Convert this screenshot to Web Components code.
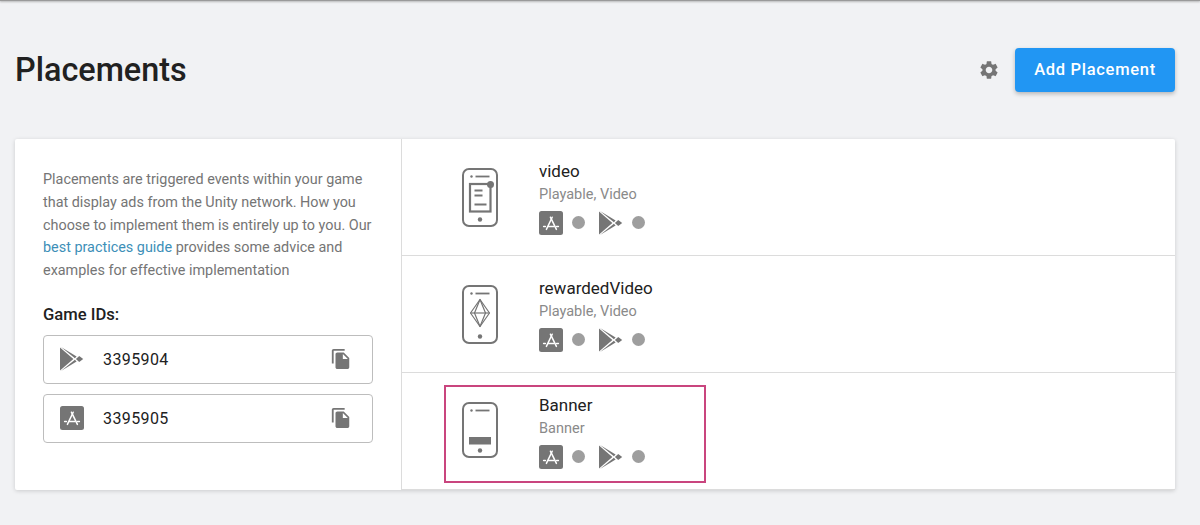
<!DOCTYPE html>
<html>
<head>
<meta charset="utf-8">
<title>Placements</title>
<style>
html, body { margin: 0; padding: 0; height: 100%; overflow: hidden; }
body { background: #f1f2f4; font-family: Roboto, "Liberation Sans", sans-serif; }
</style>
</head>
<body>
<placements-page>
  <span slot="title">Placements</span>
  <info-panel slot="left">
    Placements are triggered events within your game that display ads from the Unity network. How you choose to implement them is entirely up to you. Our <a href="#">best practices guide</a> provides some advice and examples for effective implementation
    <game-id slot="ids" store="play">3395904</game-id>
    <game-id slot="ids" store="apple">3395905</game-id>
  </info-panel>
  <placement-row slot="rows" kind="video"><span slot="name">video</span><span slot="sub">Playable, Video</span></placement-row>
  <placement-row slot="rows" kind="rewarded"><span slot="name">rewardedVideo</span><span slot="sub">Playable, Video</span></placement-row>
  <placement-row slot="rows" kind="banner" highlight><span slot="name">Banner</span><span slot="sub">Banner</span></placement-row>
</placements-page>

<script>
// small helper, every component just sets its own shadow markup
function shadow(el, html) {
  el.attachShadow({ mode: 'open' }).innerHTML = html
}

const GEAR = 'M19.14 12.94c.04-.3.06-.61.06-.94 0-.32-.02-.64-.07-.94l2.03-1.58c.18-.14.23-.41.12-.61l-1.92-3.32c-.12-.22-.37-.29-.59-.22l-2.39.96c-.5-.38-1.03-.7-1.62-.94l-.36-2.54c-.04-.24-.24-.41-.48-.41h-3.84c-.24 0-.43.17-.47.41l-.36 2.54c-.59.24-1.13.57-1.62.94l-2.39-.96c-.22-.08-.47 0-.59.22L2.74 8.87c-.12.21-.08.47.12.61l2.03 1.58c-.05.3-.09.63-.09.94s.02.64.07.94l-2.03 1.58c-.18.14-.23.41-.12.61l1.92 3.32c.12.22.37.29.59.22l2.39-.96c.5.38 1.03.7 1.62.94l.36 2.54c.05.24.24.41.48.41h3.84c.24 0 .44-.17.47-.41l.36-2.54c.59-.24 1.13-.56 1.62-.94l2.39.96c.22.08.47 0 .59-.22l1.92-3.32c.12-.22.07-.47-.12-.61l-2.01-1.58zM12 15.6c-1.98 0-3.6-1.62-3.6-3.6s1.62-3.6 3.6-3.6 3.6 1.62 3.6 3.6-1.62 3.6-3.6 3.6z'
const COPY = 'M16 1H4c-1.1 0-2 .9-2 2v14h2V3h12V1zm-1 4l6 6v10c0 1.1-.9 2-2 2H7.99C6.89 23 6 22.1 6 21l.01-14c0-1.1.89-2 1.99-2h7zm-1 7h5.5L14 6.5V12z'

class StoreIcon extends HTMLElement {
  constructor() {
    super()
    const play = this.getAttribute('type') === 'play'
    const svg = play
      ? `<svg width="24" height="24" viewBox="0 0 24 24">
           <path fill="#757575" d="M0 .6 V23.4 L13.4 12 Z"/>
           <path fill="#757575" d="M1 0 L16.6 9.6 L14.9 11.2 Z"/>
           <path fill="#757575" d="M1 24 L16.6 14.4 L14.9 12.8 Z"/>
           <path fill="#757575" d="M19.2 8.9 L23.2 12 L19.2 15.1 L15.9 12 Z"/>
         </svg>`
      : `<svg width="24" height="24" viewBox="0 0 24 24">
           <rect width="24" height="24" rx="2.5" fill="#757575"/>
           <g stroke="#fff" stroke-width="1.5" fill="none" stroke-linecap="round">
             <path d="M13.2 6.2 L7.4 18.4"/>
             <path d="M11.4 6.2 L17.4 18.4"/>
             <path d="M4.6 15.4 L6.4 15.4 M9 15.4 L15 15.4 M17.6 15.4 L19.4 15.4"/>
           </g>
         </svg>`
    shadow(this, `<style>:host { display: block; width: 24px; height: 24px; } svg { display: block; }</style>${svg}`)
  }
}
customElements.define('store-icon', StoreIcon)

class PhoneIcon extends HTMLElement {
  constructor() {
    super()
    const kind = this.getAttribute('kind')
    const h = { video: 59, rewarded: 59, banner: 56 }[kind]
    const screens = {
      video: `<rect x="8" y="16" width="20.5" height="27.5" fill="none" stroke="#757575" stroke-width="2.2"/>
              <path d="M12.5 22.5h8M12.5 27.5h8M12.5 36.5h12" stroke="#757575" stroke-width="2.2"/>
              <circle cx="28.5" cy="16.5" r="3.5" fill="#757575"/>`,
      rewarded: `<g fill="none" stroke="#757575" stroke-width="1.2" stroke-linejoin="round">
                   <path d="M18 14.5 L27.5 28 L18 41.5 L8.5 28 Z"/>
                   <path d="M18 14.5 L12.5 28 L18 41.5 L23.5 28 Z"/>
                   <path d="M8.5 28 H27.5"/>
                 </g>`,
      banner: `<rect x="7" y="35" width="22" height="7.5" fill="#757575"/>`
    }
    // the banner phone sits a pixel above the row's centre in the design
    const shift = kind === 'banner' ? 'margin-top: -2px;' : ''
    shadow(this, `<style>:host { display: block; width: 36px; height: ${h}px; ${shift} } svg { display: block; }</style>
      <svg width="36" height="${h}" viewBox="0 0 36 ${h}">
        <rect x="1" y="1" width="34" height="${h - 2}" rx="6" fill="none" stroke="#757575" stroke-width="2"/>
        <circle cx="9.5" cy="8.5" r="1.2" fill="#757575"/>
        <path d="M13.5 8.5h14" stroke="#757575" stroke-width="1.8"/>
        <circle cx="18" cy="${h - 7.5}" r="2.2" fill="#757575"/>
        ${screens[kind] || ''}
      </svg>`)
  }
}
customElements.define('phone-icon', PhoneIcon)

class PlacementRow extends HTMLElement {
  constructor() {
    super()
    shadow(this, `<style>
      :host { display: flex; position: relative; align-items: center; height: 116px; padding-left: 60px; box-sizing: content-box; border-bottom: 1px solid #dcdcdc; }
      .text { margin-left: 41px; padding-top: .5px; display: flex; flex-direction: column; }
      .name { font-size: 17px; line-height: 22px; color: #212121; height: 22px; }
      .sub { font-size: 14.5px; line-height: 20px; color: #8a8a8a; margin-top: 2.5px; }
      .stores { display: flex; align-items: center; margin-top: 6px; }
      .dot { width: 13px; height: 13px; border-radius: 50%; background: #9e9e9e; margin-left: 9px; }
      .dot + store-icon { margin-left: 14px; }
      .hl { display: none; position: absolute; left: 42px; top: 12px; width: 258px; height: 94px; border: 2px solid #c9457e; }
      :host([highlight]) .hl { display: block; }
    </style>
    <phone-icon kind="${this.getAttribute('kind')}"></phone-icon>
    <div class="text">
      <div class="name"><slot name="name"></slot></div>
      <div class="sub"><slot name="sub"></slot></div>
      <div class="stores">
        <store-icon type="apple"></store-icon><div class="dot"></div>
        <store-icon type="play"></store-icon><div class="dot"></div>
      </div>
    </div>
    <div class="hl"></div>`)
  }
}
customElements.define('placement-row', PlacementRow)

class GameId extends HTMLElement {
  constructor() {
    super()
    shadow(this, `<style>
      :host { display: flex; align-items: center; height: 47px; padding: 0 20px 0 16px; border: 1px solid #bdbdbd; border-radius: 4px; color: #212121; font-size: 16px; letter-spacing: .4px; }
      .id { flex: 1; margin-left: 19px; }
      svg { display: block; }
    </style>
    <store-icon type="${this.getAttribute('store')}"></store-icon>
    <div class="id"><slot></slot></div>
    <svg width="22" height="22" viewBox="0 0 24 24"><path fill="#757575" d="${COPY}"/></svg>`)
  }
}
customElements.define('game-id', GameId)

class InfoPanel extends HTMLElement {
  constructor() {
    super()
    shadow(this, `<style>
      :host { display: block; box-sizing: border-box; width: 387px; padding: 30px 28px 0; border-right: 1px solid #dcdcdc; flex: none; }
      .copy { font-size: 14.4px; line-height: 22.75px; color: #757575; }
      ::slotted(a) { color: #3d8fb8; text-decoration: none; }
      h3 { margin: 22px 0 10px; font-size: 16.6px; font-weight: 500; line-height: 20px; color: #212121; }
      .ids { display: flex; flex-direction: column; gap: 10px; }
    </style>
    <div class="copy"><slot></slot></div>
    <h3>Game IDs:</h3>
    <div class="ids"><slot name="ids"></slot></div>`)
  }
}
customElements.define('info-panel', InfoPanel)

class PlacementsPage extends HTMLElement {
  constructor() {
    super()
    shadow(this, `<style>
      :host { display: block; }
      .topbar { height: 1px; background: #9a9a9a; box-shadow: 0 1px 2px rgba(0,0,0,.35); }
      header { display: flex; align-items: center; height: 138px; box-sizing: border-box; padding: 0 25px 0 15px; }
      h1 { flex: 1; margin: 0; font-size: 32.4px; font-weight: 500; color: #212121; }
      svg { display: block; margin-right: 15px; }
      button { width: 160px; height: 44px; border: 0; border-radius: 4px; background: #2196f3; color: #fff; font: 500 16.5px Roboto, sans-serif; letter-spacing: .7px; box-shadow: 0 2px 4px rgba(0,0,0,.25); padding: 0 0 2px; }
      .card { display: flex; margin: 0 25px 0 15px; background: #fff; border-radius: 2px; height: 351px; box-shadow: 0 1px 4px rgba(0,0,0,.16); }
      .rows { flex: 1; min-width: 0; }
    </style>
    <div class="topbar"></div>
    <header>
      <h1><slot name="title"></slot></h1>
      <svg width="22" height="22" viewBox="0 0 24 24"><path fill="#757575" d="${GEAR}"/></svg>
      <button>Add Placement</button>
    </header>
    <section class="card">
      <slot name="left"></slot>
      <div class="rows"><slot name="rows"></slot></div>
    </section>`)
  }
}
customElements.define('placements-page', PlacementsPage)
</script>
</body>
</html>
